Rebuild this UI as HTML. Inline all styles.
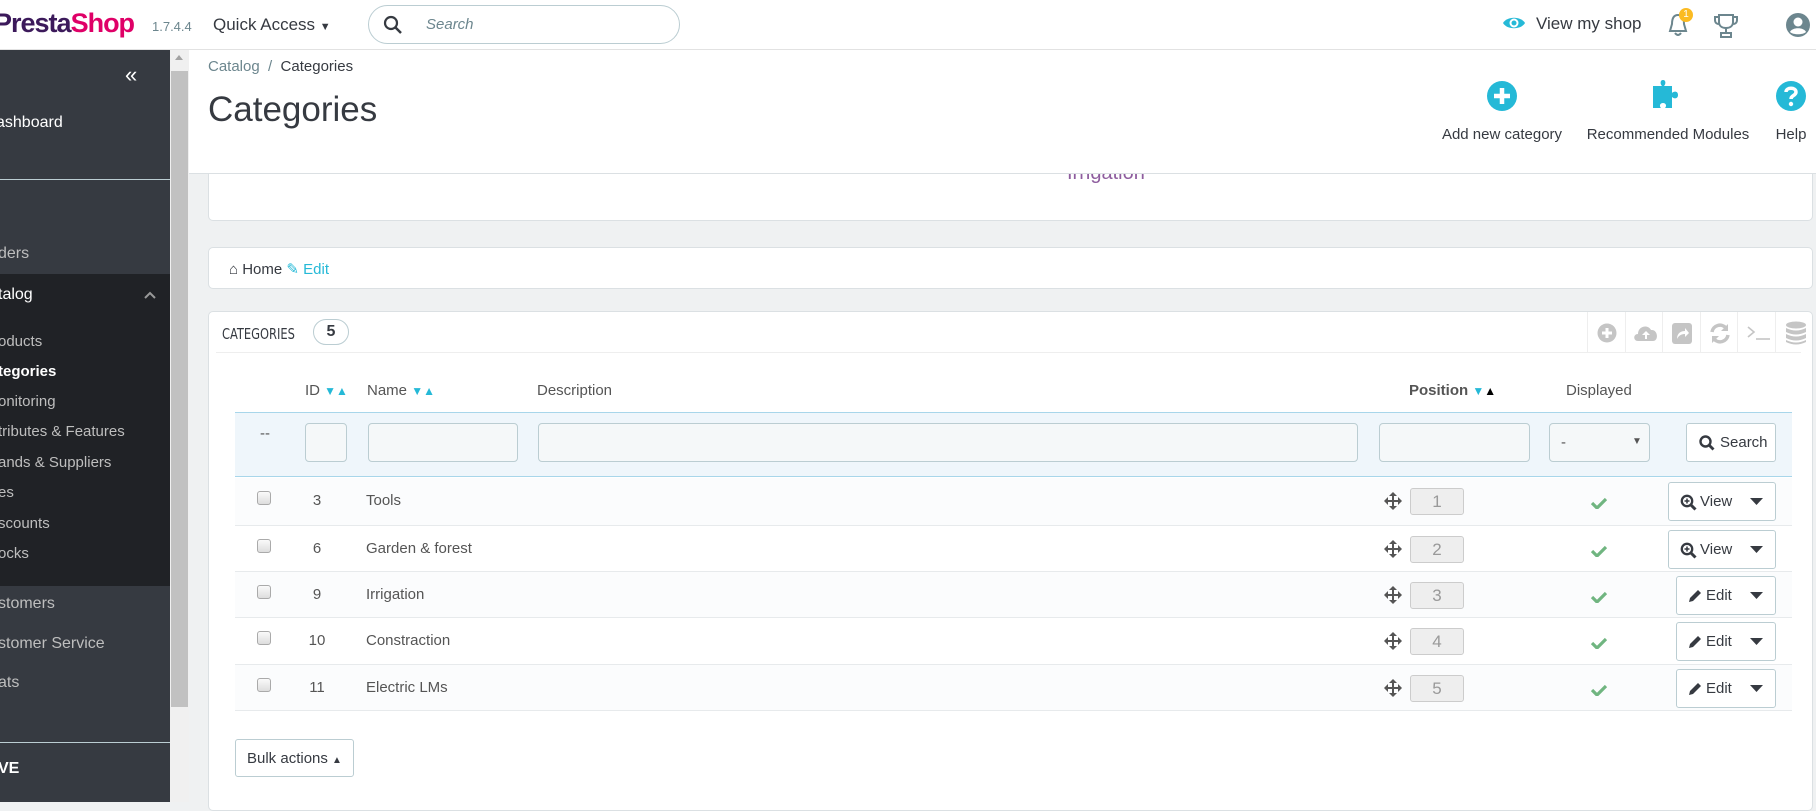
<!DOCTYPE html>
<html><head><meta charset="utf-8"><style>
*{box-sizing:border-box;margin:0;padding:0}
body{width:1816px;height:802px;overflow:hidden;background:#eff1f2;font-family:"Liberation Sans",sans-serif;color:#363a41;position:relative;font-size:15px}
.a{position:absolute}
#hdr{left:0;top:0;width:1816px;height:50px;background:#fff;border-bottom:1px solid #e2e2e2;z-index:5}
#side{left:0;top:50px;width:170px;height:752px;background:#363a41;color:#bebebe;font-size:16px}
#side div.t{position:absolute;white-space:nowrap}
#scroll{left:170px;top:50px;width:19px;height:752px;background:#f0f0f0}
#toolbar{left:189px;top:50px;width:1627px;height:124px;background:#fff;border-bottom:1px solid #dbe0e3;z-index:3}
.panel{background:#fff;border:1px solid #dbe0e3;border-radius:5px}
.inp{position:absolute;background:#f5f8f9;border:1px solid #bbcdd2;border-radius:4px;height:39px;top:423px}
.row{position:absolute;left:235px;width:1557px;border-bottom:1px solid #e7eaec;height:47px;color:#555}
.row .cb{position:absolute;left:22px;top:13px;width:14px;height:14px;border:1px solid #aaa;border-radius:3px;background:linear-gradient(#fafafa,#ddd)}
.row .id{position:absolute;left:52px;width:60px;text-align:center;top:14px}
.row .nm{position:absolute;left:131px;top:14px}
.btn{position:absolute;background:#fff;border:1px solid #bbcdd2;border-radius:3px;height:39px;font-size:15px;line-height:37px}
.ar{font-size:12px}
</style></head><body>
<div id="hdr" class="a">
 <div class="a" style="left:-6px;top:8px;font-size:27px;font-weight:bold;letter-spacing:-1px;color:#3c1a5b">Presta<span style="color:#df0067">Shop</span></div>
 <div class="a" style="left:152px;top:19px;font-size:13px;color:#6c868e">1.7.4.4</div>
 <div class="a" style="left:213px;top:15px;font-size:17px;color:#363a41">Quick Access <span style="font-size:11px">▼</span></div>
 <div class="a" style="left:368px;top:5px;width:312px;height:39px;border:1px solid #bbcdd2;border-radius:20px">
  <svg class="a" style="left:14px;top:9px" width="20" height="20" viewBox="0 0 20 20"><circle cx="8" cy="8" r="6" fill="none" stroke="#363a41" stroke-width="2.2"/><path d="M12.5 12.5L18 18" stroke="#363a41" stroke-width="2.5"/></svg>
  <div class="a" style="left:57px;top:10px;font-style:italic;color:#6c868e;font-size:15px">Search</div></div>
 <svg class="a" style="left:1502px;top:15px" width="24" height="16" viewBox="0 0 24 16"><path d="M1 8C5 1 19 1 23 8C19 15 5 15 1 8Z" fill="#25b9d7"/><circle cx="12" cy="8" r="4.5" fill="#fff"/><circle cx="12" cy="8" r="2.5" fill="#25b9d7"/></svg>
 <div class="a" style="left:1536px;top:14px;font-size:17px">View my shop</div>
 <svg class="a" style="left:1667px;top:12px" width="22" height="26" viewBox="0 0 22 26"><path d="M11 3C6 3 5 8 5 12L3 19H19L17 12C17 8 16 3 11 3Z" fill="none" stroke="#6c868e" stroke-width="2"/><path d="M8 21Q11 25 14 21" fill="none" stroke="#6c868e" stroke-width="2"/></svg>
 <div class="a" style="left:1679px;top:8px;width:14px;height:14px;border-radius:7px;background:#fbbb22;color:#fff;font-size:10px;text-align:center;line-height:14px">1</div>
 <svg class="a" style="left:1714px;top:13px" width="24" height="25" viewBox="0 0 24 25"><path d="M5 2H19V9C19 13 16 15 12 15C8 15 5 13 5 9Z M5 4H1V7C1 10 3 11 5 11 M19 4H23V7C23 10 21 11 19 11" fill="none" stroke="#6c868e" stroke-width="2"/><path d="M12 15V19M7 20H17V24H7Z" fill="none" stroke="#6c868e" stroke-width="2"/></svg>
 <svg class="a" style="left:1785px;top:12px" width="26" height="26" viewBox="0 0 26 26"><circle cx="13" cy="13" r="12" fill="#6c868e"/><circle cx="13" cy="10" r="4.5" fill="#fff"/><path d="M5 20C7 15 19 15 21 20C18 23 8 23 5 20Z" fill="#fff"/></svg>
</div>
<div id="side" class="a">
 <div class="a" style="left:125px;top:12px;font-size:22px;color:#fff">«</div>
 <div class="t" style="left:-4px;top:64px;color:#fff">ashboard</div>
 <div class="a" style="left:0;top:129px;width:170px;height:1px;background:#bbcdd2"></div>
 <div class="t" style="left:-2px;top:195px">ders</div>
 <div class="a" style="left:0;top:224px;width:170px;height:312px;background:#202226"></div>
 <div class="t" style="left:-2px;top:236px;color:#fff">talog</div>
 <svg class="a" style="left:143px;top:240px" width="14" height="10" viewBox="0 0 14 10"><path d="M2 8L7 3L12 8" fill="none" stroke="#999" stroke-width="2"/></svg>
 <div class="t" style="left:-2px;top:283px;font-size:15px">oducts</div>
 <div class="t" style="left:-2px;top:313px;font-size:15px;color:#fff;font-weight:bold">tegories</div>
 <div class="t" style="left:-2px;top:343px;font-size:15px">onitoring</div>
 <div class="t" style="left:-2px;top:373px;font-size:15px">tributes &amp; Features</div>
 <div class="t" style="left:-2px;top:404px;font-size:15px">ands &amp; Suppliers</div>
 <div class="t" style="left:-2px;top:434px;font-size:15px">es</div>
 <div class="t" style="left:-2px;top:465px;font-size:15px">scounts</div>
 <div class="t" style="left:-2px;top:495px;font-size:15px">ocks</div>
 <div class="t" style="left:-2px;top:545px">stomers</div>
 <div class="t" style="left:-2px;top:585px">stomer Service</div>
 <div class="t" style="left:-2px;top:624px">ats</div>
 <div class="a" style="left:0;top:692px;width:170px;height:1px;background:#bbcdd2"></div>
 <div class="t" style="left:-2px;top:710px;color:#fff;font-weight:bold">VE</div>
</div>
<div id="scroll" class="a"><div class="a" style="left:1px;top:21px;width:17px;height:636px;background:#c1c1c1"></div><div class="a" style="left:5px;top:5px;width:0;height:0;border:4px solid transparent;border-bottom:5px solid #a3a3a3;border-top:0"></div></div>
<div id="toolbar" class="a">
 <div class="a" style="left:19px;top:8px;font-size:15px;color:#6c868e">Catalog &nbsp;/&nbsp; <span style="color:#363a41">Categories</span></div>
 <div class="a" style="left:19px;top:40px;font-size:35px;color:#363a41">Categories</div>
 <svg class="a" style="left:1298px;top:31px" width="30" height="30" viewBox="0 0 30 30"><circle cx="15" cy="15" r="15" fill="#25b9d7"/><path d="M15 7V23M7 15H23" stroke="#fff" stroke-width="4.5"/></svg>
 <div class="a" style="left:1251px;top:76px;width:124px;text-align:center;font-size:15px;white-space:nowrap">Add new category</div>
 <svg class="a" style="left:1462px;top:28px" width="34" height="32" viewBox="0 0 34 32"><path d="M2 8H11C9 6 9 2 12 2C15 2 15 6 13 8H21V15C23 13 27 13 27 17C27 21 23 21 21 19V30H14C16 28 15 25 12 25C9 25 8 28 10 30H2Z" fill="#25b9d7"/></svg>
 <div class="a" style="left:1394px;top:76px;width:170px;text-align:center;font-size:15px;white-space:nowrap">Recommended Modules</div>
 <svg class="a" style="left:1587px;top:31px" width="30" height="30" viewBox="0 0 30 30"><circle cx="15" cy="15" r="15" fill="#25b9d7"/><path d="M10 11C10 6 20 6 20 11C20 15 15 14 15 18" fill="none" stroke="#fff" stroke-width="3.5"/><circle cx="15" cy="23" r="2.2" fill="#fff"/></svg>
 <div class="a" style="left:1580px;top:76px;width:44px;text-align:center;font-size:15px">Help</div>
</div>
<div class="a panel" style="left:208px;top:150px;width:1605px;height:71px;border-top:none"><div class="a" style="left:858px;top:12px;font-size:20px;color:#8e5d9e">Irrigation</div></div>
<div class="a panel" style="left:208px;top:247px;width:1605px;height:42px">
 <div class="a" style="left:20px;top:12px;font-size:15px">&#8962; Home <span style="color:#25b9d7">✎ Edit</span></div></div>
<div class="a panel" style="left:208px;top:311px;width:1605px;height:500px">
 <div class="a" style="left:13px;top:13px;font-size:15px;font-family:'Liberation Sans Narrow','DejaVu Sans Condensed',sans-serif;transform:scaleX(.85);transform-origin:left;color:#363a41">CATEGORIES</div>
 <div class="a" style="left:104px;top:7px;width:36px;height:26px;border:1px solid #bbcdd2;border-radius:13px;text-align:center;font-weight:bold;font-size:16px;line-height:24px;background:#fff">5</div>
 <div class="a" style="left:7px;top:40px;width:1585px;height:1px;background:#eee"></div>
 <div class="a" style="left:1378px;top:0;width:1px;height:40px;background:#eee"></div>
 <svg class="a" style="left:1388px;top:11px" width="20" height="20"><circle cx="10" cy="10" r="9.5" fill="#c5c5c5"/><path d="M10 5V15M5 10H15" stroke="#fff" stroke-width="3"/></svg>
 <div class="a" style="left:1416px;top:0;width:1px;height:40px;background:#eee"></div>
 <svg class="a" style="left:1424px;top:11px" width="26" height="20"><path d="M5 18C0 18 0 11 5 11C5 3 15 1 18 7C25 6 26 18 20 18Z" fill="#c5c5c5"/><path d="M13 8L9 12H12V16H14V12H17Z" fill="#fff"/></svg>
 <div class="a" style="left:1453px;top:0;width:1px;height:40px;background:#eee"></div>
 <svg class="a" style="left:1463px;top:11px" width="20" height="21"><rect width="20" height="21" rx="3" fill="#c5c5c5"/><path d="M5 16C5 10 9 8 13 8V5L17 10L13 14V11C10 11 7 12 5 16Z" fill="#fff"/></svg>
 <div class="a" style="left:1491px;top:0;width:1px;height:40px;background:#eee"></div>
 <svg class="a" style="left:1500px;top:11px" width="22" height="21"><path d="M3 9A8 8 0 0 1 17 5M19 12A8 8 0 0 1 5 16" fill="none" stroke="#c5c5c5" stroke-width="3.5"/><path d="M19 1V8H12Z M3 20V13H10Z" fill="#c5c5c5"/></svg>
 <div class="a" style="left:1528px;top:0;width:1px;height:40px;background:#eee"></div>
 <svg class="a" style="left:1538px;top:13px" width="24" height="16"><path d="M1 2L7 7L1 12" fill="none" stroke="#c5c5c5" stroke-width="1.6"/><path d="M9 14H23" stroke="#c5c5c5" stroke-width="1.6"/></svg>
 <div class="a" style="left:1566px;top:0;width:1px;height:40px;background:#eee"></div>
 <svg class="a" style="left:1576px;top:9px" width="22" height="25"><ellipse cx="11" cy="4" rx="10" ry="3.5" fill="#c5c5c5"/><path d="M1 7Q11 12 21 7V11Q11 16 1 11Z M1 13Q11 18 21 13V17Q11 22 1 17Z M1 19Q11 24 21 19V21Q11 26 1 21Z" fill="#c5c5c5"/></svg>
</div>
<div class="a" style="left:305px;top:382px;font-size:15px;color:#555">ID <span class="ar" style="color:#25b9d7">▼▲</span></div>
<div class="a" style="left:367px;top:382px;font-size:15px;color:#555">Name <span class="ar" style="color:#25b9d7">▼▲</span></div>
<div class="a" style="left:537px;top:382px;font-size:15px;color:#555">Description</div>
<div class="a" style="left:1409px;top:382px;font-size:15px;color:#555;font-weight:bold">Position <span class="ar" style="color:#25b9d7">▼</span><span class="ar" style="color:#000">▲</span></div>
<div class="a" style="left:1566px;top:382px;font-size:15px;color:#555">Displayed</div>
<div class="a" style="left:235px;top:412px;width:1557px;height:65px;background:#eff6fb;border-top:1px solid #a8d6ea;border-bottom:1px solid #a8d6ea"></div>
<div class="a" style="left:260px;top:425px;color:#555">--</div>
<div class="inp" style="left:305px;width:42px"></div>
<div class="inp" style="left:368px;width:150px"></div>
<div class="inp" style="left:538px;width:820px"></div>
<div class="inp" style="left:1379px;width:151px"></div>
<div class="inp" style="left:1549px;width:101px"><span class="a" style="left:11px;top:10px;color:#555">-</span><span class="a" style="left:82px;top:12px;font-size:10px;color:#555">▼</span></div>
<div class="btn" style="left:1686px;top:423px;width:90px;padding-left:33px;color:#363a41">Search<svg class="a" style="left:12px;top:11px" width="16" height="16"><circle cx="6.5" cy="6.5" r="5" fill="none" stroke="#363a41" stroke-width="2.4"/><path d="M10 10L14.5 14.5" stroke="#363a41" stroke-width="2.8"/></svg></div>

<div class="row" style="top:478px;height:48px;background:#fbfcfd"><div class="cb"></div><div class="id">3</div><div class="nm">Tools</div></div>
<div class="row" style="top:526px;height:46px"><div class="cb"></div><div class="id">6</div><div class="nm">Garden &amp; forest</div></div>
<div class="row" style="top:572px;height:46px;background:#fbfcfd"><div class="cb"></div><div class="id">9</div><div class="nm">Irrigation</div></div>
<div class="row" style="top:618px;height:47px"><div class="cb"></div><div class="id">10</div><div class="nm">Constraction</div></div>
<div class="row" style="top:665px;height:46px;background:#fbfcfd"><div class="cb"></div><div class="id">11</div><div class="nm">Electric LMs</div></div>

<div id="pos"></div>
<script>
var tops=[478,526,572,618,665],acts=["View","View","Edit","Edit","Edit"];
var h="";
for(var i=0;i<5;i++){var t=tops[i];
h+='<svg class="a" style="left:1384px;top:'+(t+14)+'px" width="18" height="18" viewBox="0 0 18 18"><path d="M9 0L13 4H10V8H14V5L18 9L14 13V10H10V14H13L9 18L5 14H8V10H4V13L0 9L4 5V8H8V4H5Z" fill="#555"/></svg>';
h+='<div class="a" style="left:1410px;top:'+(t+10)+'px;width:54px;height:27px;background:#eee;border:1px solid #ccc;border-radius:3px;text-align:center;color:#999;font-size:17px;line-height:25px">'+(i+1)+'</div>';
h+='<svg class="a" style="left:1591px;top:'+(t+19)+'px" width="16" height="12" viewBox="0 0 16 12"><path d="M1 6L6 11L15 2" fill="none" stroke="#70b580" stroke-width="3.2"/></svg>';
var L=acts[i]=="View"?1668:1676;
var ic=acts[i]=="View"?'<svg class="a" style="left:11px;top:11px" width="17" height="17"><circle cx="7" cy="7" r="5.2" fill="none" stroke="#363a41" stroke-width="2.3"/><path d="M11 11L15.5 15.5" stroke="#363a41" stroke-width="3"/><path d="M7 4.5V9.5M4.5 7H9.5" stroke="#363a41" stroke-width="1.5"/></svg>':'<svg class="a" style="left:10px;top:11px" width="16" height="16"><path d="M2 14L3 10L11 2L14 5L6 13Z" fill="#363a41"/></svg>';
h+='<div class="btn" style="left:'+L+'px;top:'+(t+4)+'px;width:'+(1776-L)+'px;height:39px;padding-left:'+(acts[i]=="View"?31:29)+'px">'+ic+acts[i]+'<svg class="a" style="right:12px;top:15px" width="13" height="8"><path d="M0 0H13L6.5 7Z" fill="#363a41"/></svg></div>';}
document.getElementById("pos").innerHTML=h;
</script>
<div class="btn" style="left:235px;top:739px;width:119px;height:38px;padding-left:11px;color:#363a41">Bulk actions <span style="font-size:10px">▲</span></div>
</body></html>
